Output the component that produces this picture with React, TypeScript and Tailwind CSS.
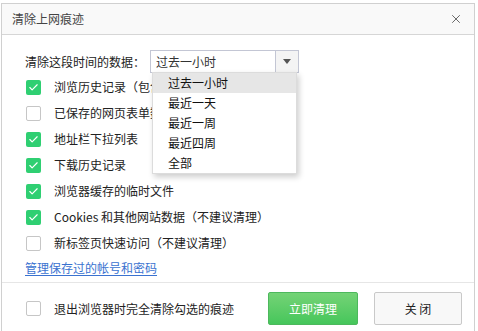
import { Check, X } from 'lucide-react';

const font = { fontFamily: '"Noto Sans CJK SC", "Noto Sans", sans-serif' };

function Box({ checked }: { checked: boolean }) {
  return checked ? (
    <span className="w-[15px] h-[15px] rounded-[2px] bg-[#2fcf72] flex items-center justify-center shrink-0">
      <Check className="w-[11px] h-[11px] text-white" strokeWidth={2.5} />
    </span>
  ) : (
    <span className="w-[15px] h-[15px] rounded-[2px] border border-[#c6c6c6] bg-white shrink-0" />
  );
}

const rows = [
  { label: '浏览历史记录（包含多标签页浏览记录）', checked: true },
  { label: '已保存的网页表单数据', checked: false },
  { label: '地址栏下拉列表', checked: true },
  { label: '下载历史记录', checked: true },
  { label: '浏览器缓存的临时文件', checked: true },
  { label: 'Cookies 和其他网站数据（不建议清理）', checked: true },
  { label: '新标签页快速访问（不建议清理）', checked: false },
];

const options = ['过去一小时', '最近一天', '最近一周', '最近四周', '全部'];

export default function App() {
  return (
    <div className="w-[478px] h-[331px] bg-white overflow-hidden pt-[3px] pl-[1px]" style={font}>
      <div className="w-[474px] h-[340px] border border-[#d0d0d0] bg-white flex flex-col">
        <div className="h-[31px] bg-[#f9f9f9] border-b border-[#d6d6d6] flex items-center justify-between pl-[10px] pr-[11px] shrink-0">
          <span className="text-[12px] text-[#444]">清除上网痕迹</span>
          <X className="w-[14px] h-[14px] text-[#555]" strokeWidth={1.5} />
        </div>

        <div className="pl-[23px] pt-[15px] border-b border-[#e6e6e6] h-[248px] shrink-0">
          <div className="h-[24px] flex items-start">
            <span className="text-[12px] text-[#222] w-[125px] leading-[23px] whitespace-nowrap">清除这段时间的数据：</span>
            <div className="relative">
              <div className="w-[149px] h-[23px] border border-[#c3c6d4] bg-white flex">
                <span className="flex-1 text-[12px] text-[#333] pl-[5px] leading-[21px]">过去一小时</span>
                <span className="w-[23px] border-l border-[#c3c6d4] bg-[#f4f4f4] flex items-center justify-center">
                  <span className="w-0 h-0 border-l-[4px] border-r-[4px] border-t-[5px] border-l-transparent border-r-transparent border-t-[#555]" />
                </span>
              </div>
              <div className="absolute left-[2px] top-[22px] w-[145px] bg-white border border-[#dcdcdc] shadow-[2px_3px_6px_rgba(0,0,0,0.2)] z-10">
                {options.map((o, i) => (
                  <div
                    key={o}
                    className={`h-[20px] pl-[15px] text-[12px] text-[#111] leading-[20px] ${i === 0 ? 'bg-[#e6e6e6]' : ''}`}
                  >
                    {o}
                  </div>
                ))}
              </div>
            </div>
          </div>
          {rows.map((r) => (
            <div key={r.label} className="h-[26px] flex items-center gap-[13px] pl-[1px]">
              <Box checked={r.checked} />
              <span className="text-[12px] text-[#222] whitespace-nowrap">{r.label}</span>
            </div>
          ))}
          <div className="h-[24px] flex items-center">
            <a className="text-[12px] text-[#3a72d0] underline underline-offset-2">管理保存过的帐号和密码</a>
          </div>
        </div>

        <div className="flex items-center pl-[24px] pr-[12px] pt-[9px]">
          <Box checked={false} />
          <span className="ml-[13px] text-[12px] text-[#222] flex-1">退出浏览器时完全清除勾选的痕迹</span>
          <button className="w-[90px] h-[33px] rounded-[2px] border border-[#4db85d] bg-gradient-to-b from-[#73d376] to-[#45c65b] text-white text-[12px]">
            立即清理
          </button>
          <button className="ml-[16px] w-[88px] h-[33px] rounded-[2px] border border-[#c9c9c9] bg-[#f8f8f8] text-[#222] text-[12px]">
            关 闭
          </button>
        </div>
      </div>
    </div>
  );
}
